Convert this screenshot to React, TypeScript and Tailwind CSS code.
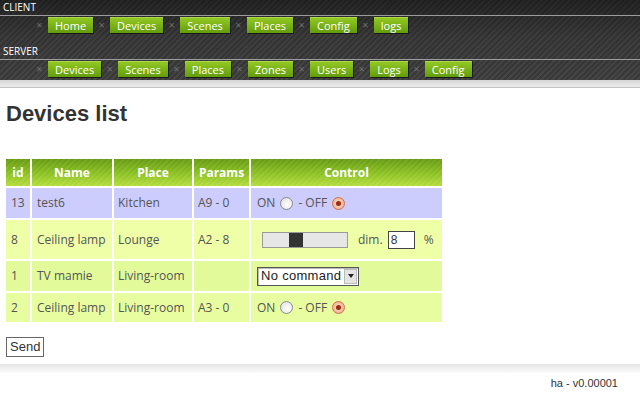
import React from 'react';

const clientLinks = ['Home', 'Devices', 'Scenes', 'Places', 'Config', 'logs'];
const serverLinks = ['Devices', 'Scenes', 'Places', 'Zones', 'Users', 'Logs', 'Config'];

const NavRow = ({ links, className }: { links: string[]; className: string }) => (
  <div className={`flex items-start pl-[31px] ${className}`}>
    {links.map((l) => (
      <React.Fragment key={l}>
        <span className="w-[17px] text-center text-[11px] leading-[15px] text-[#6f6f6f]">×</span>
        <a className="h-[16px] px-[7px] text-[11px] leading-[15px] text-white bg-[linear-gradient(#92c823,#629c0c)] border-t border-[#a9d64a] shadow-[1px_1px_0_#1a1a1a]">
          {l}
        </a>
      </React.Fragment>
    ))}
  </div>
);

const Radio = ({ checked }: { checked?: boolean }) =>
  checked ? (
    <span className="inline-flex w-[13px] h-[13px] rounded-full border border-[#d0704a] bg-[radial-gradient(#fbe3d6,#f0a27c)] items-center justify-center align-[-2px]">
      <span className="w-[5px] h-[5px] rounded-full bg-[#9b2a12]" />
    </span>
  ) : (
    <span className="inline-block w-[13px] h-[13px] rounded-full border border-[#8a8a8a] bg-[radial-gradient(circle_at_60%_60%,#ffffff,#dcdcdc)] align-[-2px]" />
  );

const OnOff = () => (
  <span className="flex items-center gap-[5px] text-[12px] text-[#555]">
    ON <Radio /> - OFF <Radio checked />
  </span>
);

const rows = [
  { id: '13', name: 'test6', place: 'Kitchen', params: 'A9 - 0', bg: 'bg-[#ccccfd]', h: 'h-[30px]', ctrl: 'onoff' },
  { id: '8', name: 'Ceiling lamp', place: 'Lounge', params: 'A2 - 8', bg: 'bg-[#eeffa8]', h: 'h-[39px]', ctrl: 'dim' },
  { id: '1', name: 'TV mamie', place: 'Living-room', params: '', bg: 'bg-[#e2fa9a]', h: 'h-[30px]', ctrl: 'select' },
  { id: '2', name: 'Ceiling lamp', place: 'Living-room', params: 'A3 - 0', bg: 'bg-[#e8fda0]', h: 'h-[29px]', ctrl: 'onoff' },
];

const th = 'text-[12px] font-bold text-white text-center';

export default function App() {
  return (
    <div className="w-[640px] h-[405px] bg-white overflow-hidden font-['Open_Sans',sans-serif]">
      {/* Top navigation */}
      <div className="bg-[linear-gradient(rgba(10,10,10,0.55),rgba(30,30,30,0.25)_45%,rgba(70,70,70,0.05)),repeating-linear-gradient(135deg,#383838_0px,#383838_2px,#464646_2px,#464646_4px)]">
        <div className="h-[15px] pl-[3px] text-[10px] leading-[15px] text-white">CLIENT</div>
        <div className="h-px bg-[#9c9c9c]" />
        <NavRow links={clientLinks} className="h-[28px] pt-px" />
        <div className="h-[15px] pl-[3px] text-[10px] leading-[15px] text-white">SERVER</div>
        <div className="h-px bg-[#9c9c9c]" />
        <NavRow links={serverLinks} className="h-[20px] pt-px" />
      </div>
      <div className="h-[8px] bg-[linear-gradient(#d6d6d6,#ececec)] border-b border-[#c4c4c4]" />

      {/* Content */}
      <div className="bg-[linear-gradient(#ffffff_0px,#ffffff_40px,#f5f5f5_44px,#ffffff_60px)]">
        <h1 className="pt-[13px] pl-[6px] h-[38px] text-[22px] leading-[26px] font-bold text-[#333] font-['Liberation_Sans',sans-serif]">
          Devices list
        </h1>
      </div>

      <table className="mt-[31px] ml-[4px] border-separate border-spacing-[2px] text-[12px] text-[#555]">
        <thead>
          <tr className="h-[27px]">
            {[
              ['id', 'w-[24px]'],
              ['Name', 'w-[80px]'],
              ['Place', 'w-[78px]'],
              ['Params', 'w-[55px]'],
              ['Control', 'w-[191px]'],
            ].map(([t, w]) => (
              <th
                key={t}
                className={`${th} ${w} p-0 bg-[repeating-linear-gradient(135deg,rgba(255,255,255,0)_0px,rgba(255,255,255,0)_2px,rgba(255,255,255,0.08)_2px,rgba(255,255,255,0.08)_4px),linear-gradient(#679a12,#8cc222_55%,#b4dc3c)]`}
              >
                {t}
              </th>
            ))}
          </tr>
        </thead>
        <tbody>
          {rows.map((r) => (
            <tr key={r.id} className={`${r.h}`}>
              <td className={`${r.bg} pl-[5px]`}>{r.id}</td>
              <td className={`${r.bg} pl-[5px] whitespace-nowrap`}>{r.name}</td>
              <td className={`${r.bg} pl-[4px] whitespace-nowrap`}>{r.place}</td>
              <td className={`${r.bg} pl-[4px] whitespace-nowrap`}>{r.params}</td>
              <td className={`${r.bg} pl-[6px]`}>
                {r.ctrl === 'onoff' && <OnOff />}
                {r.ctrl === 'dim' && (
                  <div className="flex items-center">
                    <div className="ml-[5px] w-[86px] h-[16px] border border-[#9a9a9a] bg-[#e6e6e6] flex">
                      <div className="ml-[26px] w-[14px] h-full bg-[#333]" />
                    </div>
                    <span className="ml-[10px] text-[#555]">dim.</span>
                    <div className="ml-[5px] w-[27px] h-[18px] border border-[#444] bg-white text-[12px] leading-[16px] pl-[2px] text-[#333] font-['Liberation_Sans',sans-serif]">
                      8
                    </div>
                    <span className="ml-[9px]">%</span>
                  </div>
                )}
                {r.ctrl === 'select' && (
                  <div className="w-[102px] h-[19px] border border-[#555] bg-white flex items-center justify-between text-[13px] text-[#222] font-['Liberation_Sans',sans-serif] shadow-[inset_1px_1px_0_#bbb]">
                    <span className="pl-[3px] tracking-[0.3px]">No command</span>
                    <span className="mr-px w-[13px] h-[15px] bg-[#e4e4e4] border border-[#bbb] flex items-center justify-center">
                      <svg width="6" height="4" viewBox="0 0 6 4">
                        <path d="M0 0h6L3 4z" fill="#222" />
                      </svg>
                    </span>
                  </div>
                )}
              </td>
            </tr>
          ))}
        </tbody>
      </table>

      <button className="mt-[13px] ml-[6px] h-[20px] px-[3px] border border-[#666] bg-white text-[13px] leading-[18px] text-[#333] font-['Liberation_Sans',sans-serif]">
        Send
      </button>

      <div className="mt-[7px] h-[9px] bg-[linear-gradient(#e6e6e6,#fafafa)]" />
      <div className="pr-[22px] pt-[2px] text-right text-[11px] text-[#333] font-['Liberation_Sans',sans-serif]">
        ha - v0.00001
      </div>
    </div>
  );
}
